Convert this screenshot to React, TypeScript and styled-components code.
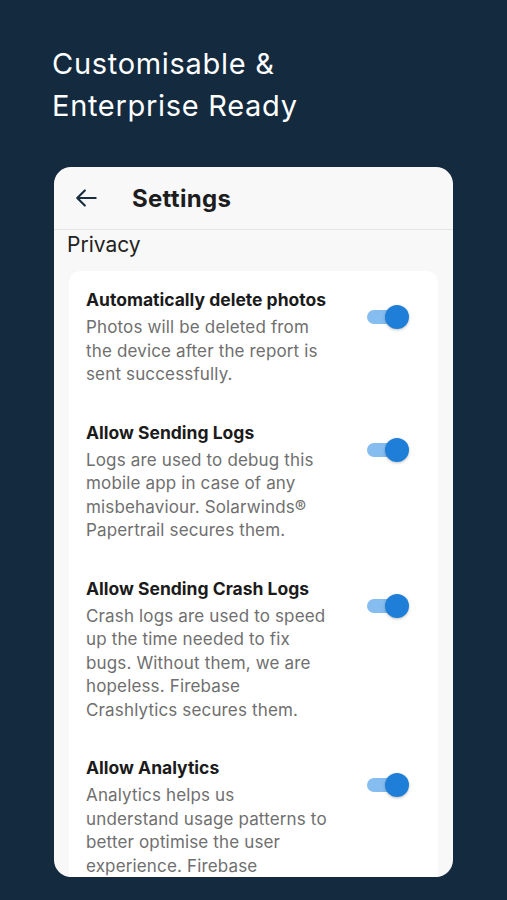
import * as React from "react";
import styled, { createGlobalStyle } from "styled-components";

const GlobalStyle = createGlobalStyle`
  html, body {
    margin: 0;
    padding: 0;
    background: #142a3f;
  }
  body {
    font-family: Inter, "Noto Sans", sans-serif;
  }
`;

const Page = styled.div`
  width: 507px;
  height: 900px;
  background: #142a3f;
  display: flex;
  flex-direction: column;
  padding: 43px 0 0 52px;
  box-sizing: border-box;
  overflow: hidden;
`;

const Headline = styled.h1`
  margin: 0;
  font-family: Inter, sans-serif;
  font-weight: 400;
  font-size: 29px;
  line-height: 42px;
  letter-spacing: 0.7px;
  color: #ffffff;
`;

const Phone = styled.div`
  margin: 40px 0 0 2px;
  width: 399px;
  height: 710px;
  background: #f8f8f8;
  border-radius: 17px;
  overflow: hidden;
  display: flex;
  flex-direction: column;
`;

const TopBar = styled.div`
  height: 63px;
  flex-shrink: 0;
  display: flex;
  align-items: center;
  padding: 0 0 0 20px;
  border-bottom: 1.5px solid #e6e6e6;
  box-sizing: border-box;
`;

const BackButton = styled.div`
  width: 26px;
  height: 26px;
  display: flex;
  align-items: center;
  justify-content: center;
  margin-right: 32px;
`;

const Title = styled.div`
  font-size: 24px;
  font-weight: 700;
  color: #1d1d1f;
  letter-spacing: 0.3px;
`;

const SectionLabel = styled.div`
  padding: 2px 0 0 13px;
  font-size: 21px;
  line-height: 26px;
  color: #222;
`;

const Group = styled.div`
  margin: 13px 15px 0 15px;
  background: #ffffff;
  border-radius: 12px;
  padding: 17px 0 0 17px;
  display: flex;
  flex-direction: column;
  gap: 34px;
`;

const Row = styled.div`
  display: flex;
  align-items: flex-start;
`;

const RowText = styled.div`
  width: 249px;
  display: flex;
  flex-direction: column;
  gap: 4px;
`;

const RowTitle = styled.div`
  font-size: 17.5px;
  line-height: 24px;
  font-weight: 700;
  color: #1b1b1b;
  white-space: nowrap;
`;

const RowDesc = styled.div`
  font-size: 17px;
  line-height: 23.5px;
  letter-spacing: 0.15px;
  color: #6f6f6f;
  white-space: pre-line;
`;

const Switch = styled.div`
  margin: 17px 0 0 32px;
  width: 42px;
  height: 24px;
  position: relative;
  flex-shrink: 0;
`;

const Track = styled.div<{ $on: boolean }>`
  position: absolute;
  left: 0;
  top: 5px;
  width: 34px;
  height: 14px;
  border-radius: 7px;
  background: ${(p) => (p.$on ? "#85bdf0" : "#c8c8c8")};
`;

const Thumb = styled.div<{ $on: boolean }>`
  position: absolute;
  top: 0;
  left: ${(p) => (p.$on ? "18px" : "0")};
  width: 24px;
  height: 24px;
  border-radius: 50%;
  background: ${(p) => (p.$on ? "#1f7fd8" : "#f2f2f2")};
  box-shadow: 0 1px 3px rgba(0, 0, 0, 0.25);
`;

const settings = [
  {
    title: "Automatically delete photos",
    desc: "Photos will be deleted from the device after the report is sent successfully.",
  },
  {
    title: "Allow Sending Logs",
    desc: "Logs are used to debug this mobile app in case of any misbehaviour. Solarwinds® Papertrail secures them.",
  },
  {
    title: "Allow Sending Crash Logs",
    desc: "Crash logs are used to speed up the time needed to fix bugs. Without them, we are hopeless. Firebase Crashlytics secures them.",
  },
  {
    title: "Allow Analytics",
    desc: "Analytics helps us\nunderstand usage patterns to better optimise the user experience. Firebase Analytics secures them.",
  },
];

function Toggle({ on }: { on: boolean }) {
  return (
    <Switch>
      <Track $on={on} />
      <Thumb $on={on} />
    </Switch>
  );
}

export default function App() {
  return (
    <>
      <GlobalStyle />
      <Page>
        <Headline>
          Customisable &amp;
          <br />
          Enterprise Ready
        </Headline>
        <Phone>
          <TopBar>
            <BackButton>
              <svg width="26" height="26" viewBox="0 0 24 24" fill="none">
                <path
                  d="M20 12H4M10 5l-7 7 7 7"
                  stroke="#1c2d3f"
                  strokeWidth="2"
                  strokeLinecap="round"
                  strokeLinejoin="round"
                />
              </svg>
            </BackButton>
            <Title>Settings</Title>
          </TopBar>
          <SectionLabel>Privacy</SectionLabel>
          <Group>
            {settings.map((s) => (
              <Row key={s.title}>
                <RowText>
                  <RowTitle>{s.title}</RowTitle>
                  <RowDesc>{s.desc}</RowDesc>
                </RowText>
                <Toggle on />
              </Row>
            ))}
          </Group>
        </Phone>
      </Page>
    </>
  );
}
